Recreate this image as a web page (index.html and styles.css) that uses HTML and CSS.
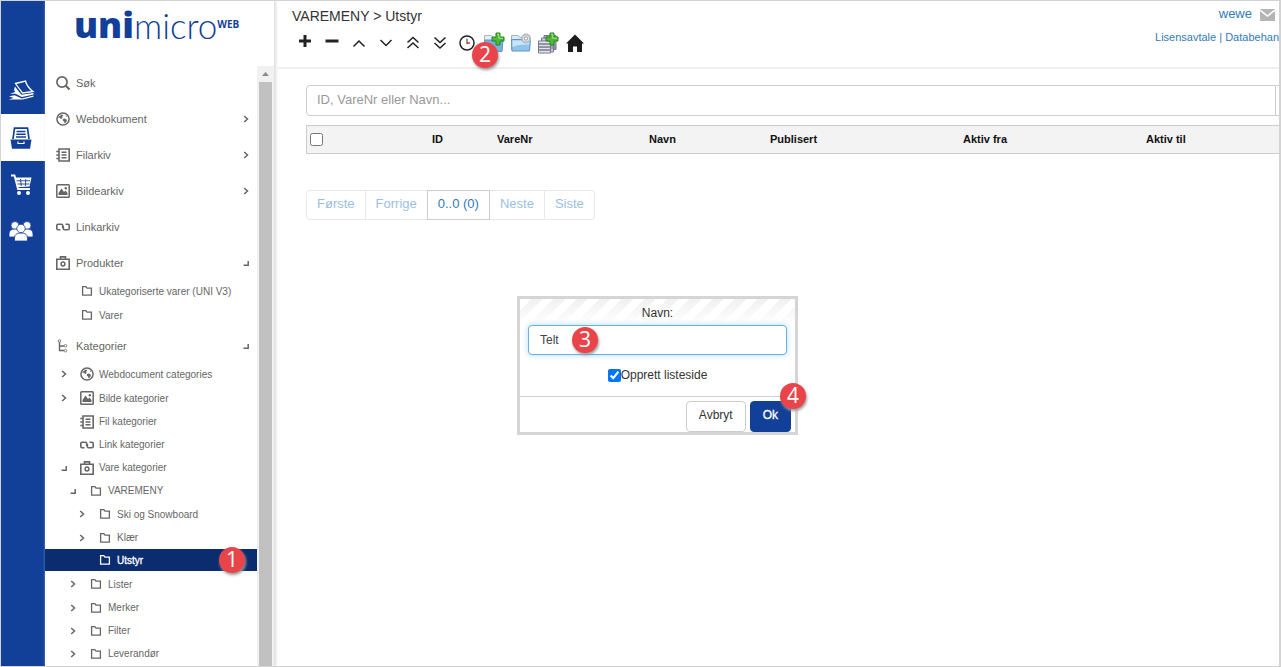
FILE: index.html
```html
<!DOCTYPE html>
<html lang="no">
<head>
<meta charset="utf-8">
<title>Unimicro Web</title>
<link rel="stylesheet" href="styles.css">
</head>
<body>
<svg class="defs" aria-hidden="true">
  <symbol id="globe" viewBox="0 0 14 14"><circle cx="7" cy="7" r="6.1" fill="none" stroke="currentColor" stroke-width="1.5"/><path d="M2.5 4.8 6 2.6 7.4 3.4 5.8 5 6.8 6 5 7 3.6 5.6 2.4 6.2ZM7 7l2-.4L11 8l-.6 1.8L8.6 11.6 8 9.4 6.6 8.2ZM9.6 3l1.6 1.2-.8.8Z" fill="currentColor"/></symbol>
  <symbol id="book" viewBox="0 0 14 14"><path d="M3 1h10.2v12H3ZM.3 3.5H3M.3 7H3M.3 10.500H3M5.500 4.200H10.500M5.500 7H10.500M5.500 9.800H10.500" fill="none" stroke="currentColor" stroke-width="1.600"/></symbol>
  <symbol id="image" viewBox="0 0 14 14"><rect x=".8" y=".8" width="12.400" height="12.400" rx=".8" fill="none" stroke="currentColor" stroke-width="1.500"/><path d="M2.500 11V9L5.500 4.500 8 8l1.500-1.500 2 2.500v2Z" fill="currentColor"/><circle cx="9.800" cy="4.300" r="1.200" fill="currentColor"/></symbol>
  <symbol id="link" viewBox="0 0 14 14"><path d="M4.500 9.800H2Q.8 9.800.8 8.600V5.400Q.8 4.200 2 4.200H5.500Q6.700 4.200 6.700 5.400V8M9.500 4.200H12Q13.200 4.200 13.200 5.400V8.600q0 1.200-1.200 1.200H8.500Q7.300 9.800 7.300 8.600V6" fill="none" stroke="currentColor" stroke-width="1.600"/></symbol>
  <symbol id="case" viewBox="0 0 14 14"><path d="M.8 3.200h12.400v10H.8ZM4.500 3V.9h5V3" fill="none" stroke="currentColor" stroke-width="1.600"/><circle cx="7" cy="8" r="1.900" fill="none" stroke="currentColor" stroke-width="1.500"/></symbol>
  <symbol id="folder" viewBox="0 0 14 14"><path d="M2.600 2.600h3.200L7 4.200h4.400v7H2.600Z" fill="none" stroke="currentColor" stroke-width="1.300"/></symbol>
  <symbol id="tree" viewBox="0 0 14 14"><path d="M3.500 3v8.500H8M3.500 7H8" fill="none" stroke="currentColor" stroke-width="1.400"/><circle cx="3.500" cy="2" r="1.300" fill="none" stroke="currentColor" stroke-width=".8"/><circle cx="9.500" cy="6.800" r="1.300" fill="none" stroke="currentColor" stroke-width=".8"/><circle cx="9.500" cy="11.700" r="1.300" fill="none" stroke="currentColor" stroke-width=".8"/></symbol>
  <symbol id="closed" viewBox="0 0 8 8"><path d="M2.200 1 5.500 4 2.200 7" fill="none" stroke="currentColor" stroke-width="1.500"/></symbol>
  <symbol id="open" viewBox="0 0 8 8"><path d="M6.200 2v4.200H1.500" fill="none" stroke="currentColor" stroke-width="1.500"/></symbol>
  <symbol id="plusbadge" viewBox="0 0 14 14"><path d="M5 1h4v4h4v4H9v4H5V9H1V5h4Z" fill="#52b83c" stroke="#25821d"/><path d="M6 2.200h1.800v4H12" fill="none" stroke="#a5ec80" stroke-width="1"/></symbol>
</svg>

<div class="app">
  <nav class="rail" aria-label="Moduler">
    <a class="rail-item" href="#sider" aria-label="Sider"><svg viewBox="0 0 28 24"><path d="M8.500 4.500 18.500 2Q20 8 26 12.500L15.500 14Q12 9.500 8.500 4.500Z" fill="none" stroke="#fff" stroke-width="1.300"/><path d="M8 7.500q3.500 5 6.500 8.200L26.500 14v1.500L15 18 8.500 14.800H3L8.200 13 7 11ZM2 17.200l5.500-1 7.500 3.200 11.500-2.900v1.300L16 20.500H1.500l5-1.500Z" fill="#fff"/></svg></a>
    <a class="rail-item selected" href="#arkiv" aria-label="Arkiv"><svg viewBox="0 0 28 24"><path d="M6 13 7.500 2.200h13L22 13" fill="none" stroke="currentColor" stroke-width="1.700"/><path d="M9.500 5.500h9M9.300 8.300h9.400M9 11h10" stroke="currentColor" stroke-width="1.400"/><path d="M3.500 13.500h21L23 22.800H5Z" fill="currentColor"/><path d="M11 15.500v2h6v-2" fill="none" stroke="#fff" stroke-width="1.200"/></svg></a>
    <a class="rail-item" href="#butikk" aria-label="Butikk"><svg viewBox="0 0 28 24"><path d="M4 2.500h3.500L11 16h12" fill="none" stroke="#fff" stroke-width="1.800"/><path d="M8 4.500h16.500L22.500 13.500l-12 .8Z" fill="#fff"/><path d="M9.500 7.800h13.500M10.500 11h12M13.500 6l.8 7M18.800 6l-.4 7" stroke="#123f98" stroke-width=".9"/><circle cx="12" cy="20" r="2" fill="#fff"/><circle cx="21" cy="20" r="2" fill="#fff"/></svg></a>
    <a class="rail-item" href="#brukere" aria-label="Brukere"><svg viewBox="0 0 28 24"><g fill="#fff" stroke="#123f98" stroke-width=".8"><circle cx="8" cy="5.500" r="4"/><circle cx="20" cy="5.500" r="4"/><path d="M2 17v-3q0-5 6-5t6 5v3ZM14 17v-3q0-5 6-5t6 5v3Z"/><circle cx="14" cy="8.500" r="4.200"/><path d="M7.500 21v-3q0-5 6.500-5t6.500 5v3Z"/></g></svg></a>
  </nav>

  <aside class="sidebar">
    <h1 class="logo"><span class="logo-uni">uni</span><span class="logo-micro">micro</span><span class="logo-web">WEB</span></h1>
    <div class="side-body">
      <ul class="menu">
        <li><a class="item" href="#sok"><svg class="ico" viewBox="0 0 14 14"><circle cx="6" cy="6" r="5.100" fill="none" stroke="currentColor" stroke-width="1.700"/><path d="m9.800 9.800 3.700 3.700" stroke="currentColor" stroke-width="2"/></svg><span>Søk</span></a></li>
        <li><a class="item" href="#web"><svg class="ico"><use href="#globe"/></svg><span>Webdokument</span><svg class="arrow"><use href="#closed"/></svg></a></li>
        <li><a class="item" href="#fil"><svg class="ico"><use href="#book"/></svg><span>Filarkiv</span><svg class="arrow"><use href="#closed"/></svg></a></li>
        <li><a class="item" href="#bilde"><svg class="ico"><use href="#image"/></svg><span>Bildearkiv</span><svg class="arrow"><use href="#closed"/></svg></a></li>
        <li><a class="item" href="#link-arkiv"><svg class="ico"><use href="#link"/></svg><span>Linkarkiv</span></a></li>
        <li><a class="item" href="#produkter"><svg class="ico"><use href="#case"/></svg><span>Produkter</span><svg class="arrow"><use href="#open"/></svg></a>
          <ul class="tree">
            <li><a class="node tall" href="#ukat"><span class="arrow"></span><svg class="ico"><use href="#folder"/></svg><span>Ukategoriserte varer (UNI V3)</span></a></li>
            <li><a class="node tall" href="#varer"><span class="arrow"></span><svg class="ico"><use href="#folder"/></svg><span>Varer</span></a></li>
          </ul>
        </li>
        <li><a class="item" href="#kategorier"><svg class="ico"><use href="#tree"/></svg><span>Kategorier</span><svg class="arrow"><use href="#open"/></svg></a>
          <ul class="tree">
            <li><a class="node tall" href="#k1"><svg class="arrow"><use href="#closed"/></svg><svg class="ico"><use href="#globe"/></svg><span>Webdocument categories</span></a></li>
            <li><a class="node tall" href="#k2"><svg class="arrow"><use href="#closed"/></svg><svg class="ico"><use href="#image"/></svg><span>Bilde kategorier</span></a></li>
            <li><a class="node" href="#k3"><span class="arrow"></span><svg class="ico"><use href="#book"/></svg><span>Fil kategorier</span></a></li>
            <li><a class="node" href="#k4"><span class="arrow"></span><svg class="ico"><use href="#link"/></svg><span>Link kategorier</span></a></li>
            <li><a class="node" href="#k5"><svg class="arrow"><use href="#open"/></svg><svg class="ico"><use href="#case"/></svg><span>Vare kategorier</span></a>
              <ul class="branch">
                <li><a class="node" href="#v1"><svg class="arrow"><use href="#open"/></svg><svg class="ico"><use href="#folder"/></svg><span>VAREMENY</span></a>
                  <ul class="branch">
                    <li><a class="node tall" href="#ski"><svg class="arrow"><use href="#closed"/></svg><svg class="ico"><use href="#folder"/></svg><span>Ski og Snowboard</span></a></li>
                    <li><a class="node" href="#klaer"><svg class="arrow"><use href="#closed"/></svg><svg class="ico"><use href="#folder"/></svg><span>Klær</span></a></li>
                    <li><a class="node current" href="#utstyr"><span class="arrow"></span><svg class="ico"><use href="#folder"/></svg><span>Utstyr</span><b class="badge badge-one">1</b></a></li>
                  </ul>
                </li>
                <li><a class="node tall" href="#lister"><svg class="arrow"><use href="#closed"/></svg><svg class="ico"><use href="#folder"/></svg><span>Lister</span></a></li>
                <li><a class="node" href="#merker"><svg class="arrow"><use href="#closed"/></svg><svg class="ico"><use href="#folder"/></svg><span>Merker</span></a></li>
                <li><a class="node" href="#filter"><svg class="arrow"><use href="#closed"/></svg><svg class="ico"><use href="#folder"/></svg><span>Filter</span></a></li>
                <li><a class="node" href="#lev"><svg class="arrow"><use href="#closed"/></svg><svg class="ico"><use href="#folder"/></svg><span>Leverandør</span></a></li>
              </ul>
            </li>
          </ul>
        </li>
      </ul>
      <div class="scrollbar"><svg viewBox="0 0 17 16"><path d="M5 10h7L8.500 6Z" fill="#8b8b8b"/></svg><div class="thumb"></div></div>
    </div>
  </aside>

  <main class="main">
    <header class="top">
      <div>
        <h2 class="crumb">VAREMENY &gt; Utstyr</h2>
        <div class="tools">
          <button aria-label="Legg til"><svg viewBox="0 0 22 22"><path d="M11 3v12M5 9h12" stroke="#222" stroke-width="3"/></svg></button>
          <button aria-label="Fjern"><svg viewBox="0 0 22 22"><path d="M4.500 9h13" stroke="#222" stroke-width="3"/></svg></button>
          <button aria-label="Opp"><svg viewBox="0 0 22 22"><path d="m5.500 14.500 5.500-5.500 5.500 5.500" fill="none" stroke="#222" stroke-width="1.500"/></svg></button>
          <button aria-label="Ned"><svg viewBox="0 0 22 22"><path d="m5.500 8 5.500 5.500L16.500 8" fill="none" stroke="#222" stroke-width="1.500"/></svg></button>
          <button aria-label="Øverst"><svg viewBox="0 0 22 22"><path d="m5.500 10.500 5.500-5 5.500 5m-11 5.500 5.500-5 5.500 5" fill="none" stroke="#222" stroke-width="1.500"/></svg></button>
          <button aria-label="Nederst"><svg viewBox="0 0 22 22"><path d="m5.500 5.500 5.500 5 5.500-5m-11 5.500 5.500 5 5.500-5" fill="none" stroke="#222" stroke-width="1.500"/></svg></button>
          <button aria-label="Tidsplan"><svg viewBox="0 0 22 22"><circle cx="11" cy="11" r="7" fill="#fff" stroke="#222" stroke-width="1.500"/><path d="M11 6.500V12" stroke="#333"/><path d="M11 11h3" stroke="#c33" stroke-width="1.500"/></svg></button>
          <button aria-label="Ny mappe"><svg viewBox="0 0 22 22"><path d="M1.500 19V3.500h7l1.500 2h9V19Z" fill="#e7eff6" stroke="#a8b8c4"/><path d="M1.500 8H20L19 19.500H1.500Z" fill="#74b2df" stroke="#5b98c6"/><use href="#plusbadge" x="8" y="0" width="14" height="14"/></svg><b class="badge badge-two">2</b></button>
          <button aria-label="Mappeinnstillinger"><svg viewBox="0 0 22 22"><path d="M1.500 18V3.500h7l1.500 2h9V18Z" fill="#d9e8f4" stroke="#a3b5c3"/><path d="M1.500 7.500h19L19.500 19H2Z" fill="#91c4ea" stroke="#5b98c6"/><path d="M2.500 8.500h17l-.4 4Q8 12 2.500 15Z" fill="#c9e5f8"/><circle cx="16" cy="6.500" r="4" fill="#edf0f2" stroke="#b4bdc4" stroke-width="2"/><circle cx="16" cy="6.500" r="1.700" fill="#fff" stroke="#8c9aa4"/></svg></button>
          <button aria-label="Ny liste"><svg viewBox="0 0 22 22"><path d="M7 3.500h12v14H7Z" fill="#aaaabd" stroke="#77788d"/><path d="M4.500 6h12v14h-12Z" fill="#c8c8d7" stroke="#77788d"/><path d="M1.500 9h12v12h-12Z" fill="#e4e4ee" stroke="#77788d"/><path d="M2 12h11M2 15h11M2 18h11" stroke="#77788d" stroke-width="1.500"/><path d="M14 14h5M14 16h5" stroke="#77788d"/><use href="#plusbadge" x="8" y="0" width="14" height="14"/></svg></button>
          <button aria-label="Hjem"><svg viewBox="0 0 22 22"><path d="m11 2.500 9 9H18V20h-5v-5.500H9V20H4v-8.500H2Z" fill="#1c1c1c"/></svg></button>
        </div>
      </div>
      <div class="account">
        <div class="user"><a href="#wewe">wewe</a><a class="mail" href="#mail" aria-label="Meldinger"><svg viewBox="0 0 15 12"><path d="M0 0h15v12H0Z" fill="#b5b5b5"/><path d="m0 1 7.500 6L15 1" fill="none" stroke="#fff" stroke-width="1.600"/></svg></a></div>
        <div class="legal"><a href="#lisens">Lisensavtale</a> <span>|</span> <a href="#data">Databehan</a></div>
      </div>
    </header>

    <section class="content">
      <div class="search"><input type="text" aria-label="Søk" placeholder="ID, VareNr eller Navn..."><span class="addon"></span></div>
      <table class="grid">
        <thead><tr>
          <th class="c-check"><input type="checkbox" aria-label="Velg alle"></th><th class="c-id">ID</th><th class="c-nr">VareNr</th><th class="c-name">Navn</th><th class="c-pub">Publisert</th><th class="c-from">Aktiv fra</th><th>Aktiv til</th>
        </tr></thead>
      </table>
      <nav class="pager" aria-label="Sider">
        <button disabled>Første</button><button disabled>Forrige</button><button class="on">0..0 (0)</button><button disabled>Neste</button><button disabled>Siste</button>
      </nav>
    </section>
  </main>
</div>

<form class="dialog" role="dialog" aria-label="Navn">
  <div class="dialog-body">
    <label class="dialog-label" for="navn">Navn:</label>
    <div class="field"><input id="navn" type="text" value="Telt"><b class="badge badge-three">3</b></div>
    <label class="check"><input type="checkbox" checked>Opprett listeside</label>
  </div>
  <div class="dialog-foot">
    <button type="button" class="btn">Avbryt</button>
    <button type="button" class="btn primary">Ok<b class="badge badge-four">4</b></button>
  </div>
</form>
</body>
</html>
```

FILE: styles.css
```css
* { box-sizing: border-box; }
body {
  margin: 0;
  font-family: "Liberation Sans", Arial, sans-serif;
  font-size: 12px;
  color: #333;
  background: #fff;
}
a { color: #337ab7; text-decoration: none; }
ul { list-style: none; margin: 0; padding: 0; }
button, input { font-family: inherit; }
svg { display: block; }
.defs { position: absolute; width: 0; height: 0; }

.app {
  display: flex;
  height: 100vh;
  overflow: hidden;
  border: 1px solid #d3d3d3;
  border-right-width: 2px;
}

/* Module rail */
.rail { flex: none; width: 44px; padding-top: 66px; background: #123f98; }
.rail-item {
  display: flex;
  align-items: center;
  height: 47px;
  padding-left: 6px;
  color: #123f98;
}
.rail-item svg { width: 28px; height: 24px; }
.rail-item.selected { background: #fff; }

/* Sidebar */
.sidebar {
  flex: none;
  display: flex;
  flex-direction: column;
  width: 230px;
  border-right: 1px solid #e2e2e2;
  box-shadow: 1px 0 3px #ddd;
}
.logo {
  flex: none;
  display: flex;
  align-items: flex-start;
  height: 65px;
  margin: 0;
  padding-left: 29px;
  color: #123f98;
  font-weight: 400;
  line-height: 48px;
}
.logo-uni { font-family: "Open Sans", sans-serif; font-size: 36px; font-weight: 800; }
.logo-micro { font-family: Lato, sans-serif; font-size: 35px; font-weight: 300; }
.logo-web { font-family: "Open Sans", sans-serif; font-size: 10px; font-weight: 700; line-height: 46px; }
.side-body { display: flex; flex: 1; min-height: 0; overflow: hidden; }
.menu { flex: 1; margin-top: -1px; color: #666; font-size: 11px; }
.item {
  display: flex;
  align-items: center;
  gap: 6px;
  height: 36px;
  padding: 0 7px 0 11px;
  color: #666;
}
.item .arrow { margin-left: auto; }
.ico { flex: none; width: 14px; height: 14px; }
.arrow { flex: none; width: 8px; height: 8px; }
.tree { font-size: 10px; }
.item + .tree { margin-top: -2px; }
.tree:not(:has(.branch)) { padding-bottom: 1px; }
.node {
  position: relative;
  display: flex;
  align-items: center;
  height: 23px;
  padding-left: 15px;
  color: #666;
  white-space: nowrap;
}
.node.tall { height: 24px; }
.node .ico { margin: 0 5px 0 12px; }
.branch .node { padding-left: 24px; }
.branch .branch .node { padding-left: 33px; }
.node.current {
  height: 22px;
  margin-bottom: 1px;
  color: #fff;
  background: #0b2d70;
  -webkit-text-stroke: 0.3px #fff;
}
.scrollbar { flex: none; width: 17px; background: #f1f1f1; }
.scrollbar svg { width: 17px; height: 16px; }
.thumb { width: 13px; height: 100%; margin: 0 2px; background: #c1c1c1; }

/* Main area */
.main { flex: 1; min-width: 0; }
.top {
  display: flex;
  justify-content: space-between;
  height: 68px;
  padding-left: 17px;
  border-bottom: 2px solid #efefef;
}
.crumb { margin: 6px 0 0; font-size: 14px; font-weight: 400; line-height: 18px; }
.tools { display: flex; padding-top: 7px; }
.tools button {
  position: relative;
  width: 27px;
  height: 22px;
  padding: 0 2px;
  border: 0;
  background: none;
}
.tools svg { width: 22px; height: 22px; }
.account { text-align: right; }
.user { display: flex; justify-content: flex-end; align-items: center; gap: 8px; padding: 4px 4px 0 0; font-size: 13px; line-height: 18px; }
.mail svg { width: 15px; height: 12px; margin-top: 2px; }
.legal { padding-top: 7px; color: #337ab7; font-size: 11px; line-height: 14px; }

.content { padding: 16px 0 0 31px; }
.search { display: flex; height: 31px; }
.search input {
  flex: 1;
  min-width: 0;
  padding: 0 10px 2px;
  border: 1px solid #ccc;
  border-radius: 4px 0 0 4px;
  font-size: 13px;
  color: #555;
}
.search input::placeholder { color: #999; }
.addon { width: 3px; border: solid #ccc; border-width: 1px 0; }
.grid {
  width: 100%;
  height: 29px;
  margin-top: 9px;
  border: 1px solid #ccc;
  border-right: 0;
  border-spacing: 0;
  table-layout: fixed;
  background: #f3f3f3;
  color: #111;
  font-size: 11px;
}
.grid th { padding: 0 5px 2px; text-align: left; }
.grid input { display: block; width: 13px; height: 13px; margin: 0; }
.grid .c-check { width: 120px; padding: 0 3px; }
.c-id { width: 65px; }
.c-nr { width: 152px; }
.c-name { width: 121px; }
.c-pub { width: 193px; }
.c-from { width: 183px; }

.pager { display: flex; margin-top: 36px; }
.pager button {
  height: 30px;
  margin-right: -1px;
  padding: 0 10px 3px;
  border: 1px solid #e8e8e8;
  background: #fff;
  color: #9cc0e0;
  font-size: 13px;
}
.pager button:first-child { border-radius: 4px 0 0 4px; }
.pager button:last-child { border-radius: 0 4px 4px 0; }
.pager .on { position: relative; border-color: #ccc; color: #337ab7; }

/* Dialog */
.dialog {
  position: absolute;
  top: 296px;
  left: 517px;
  width: 281px;
  border: 3px solid #d5d5d5;
  background: #fff;
}
.dialog-body {
  padding: 6px 8px 13px;
  background:
    linear-gradient(transparent, #fff) no-repeat 0 0 / 100% 26px,
    repeating-linear-gradient(135deg, #fff 0 8px, #f1f1f1 8px 16px) no-repeat 0 0 / 100% 26px;
  text-align: center;
}
.dialog-label { display: block; line-height: 16px; }
.field { position: relative; margin-top: 4px; }
.field input {
  display: block;
  width: 100%;
  height: 30px;
  padding: 0 11px;
  border: 1px solid #66afe9;
  border-radius: 4px;
  box-shadow: 0 0 6px #b5dcf8;
  color: #444;
  font-size: 12px;
}
.check { display: flex; align-items: center; justify-content: center; margin-top: 12px; line-height: 16px; }
.check input { width: 13px; height: 13px; margin: 0; accent-color: #0075ff; }
.dialog-foot {
  display: flex;
  justify-content: flex-end;
  gap: 4px;
  padding: 4px 4px 0 0;
  border-top: 1px solid #d0d0d0;
}
.btn {
  position: relative;
  height: 31px;
  padding: 0 12px 4px;
  border: 1px solid #ccc;
  border-radius: 4px;
  background: #fff;
  color: #333;
  font-size: 12px;
}
.btn.primary { border-color: #123f98; background: #123f98; color: #fff; -webkit-text-stroke: 0.3px #fff; }

/* Numbered markers */
.badge {
  position: absolute;
  z-index: 2;
  width: 26px;
  height: 26px;
  border-radius: 50%;
  background: #e8444a;
  box-shadow: 1px 2px 3px #999;
  color: #fff;
  font-family: "Open Sans", sans-serif;
  font-size: 21px;
  font-weight: 400;
  line-height: 25px;
  text-align: center;
  -webkit-text-stroke: 0;
}
.badge-one { top: -2px; right: 12px; }
.badge-two { top: 10px; left: -9px; }
.badge-three { top: 2px; left: 44px; }
.badge-four { top: -19px; right: -16px; }
```
